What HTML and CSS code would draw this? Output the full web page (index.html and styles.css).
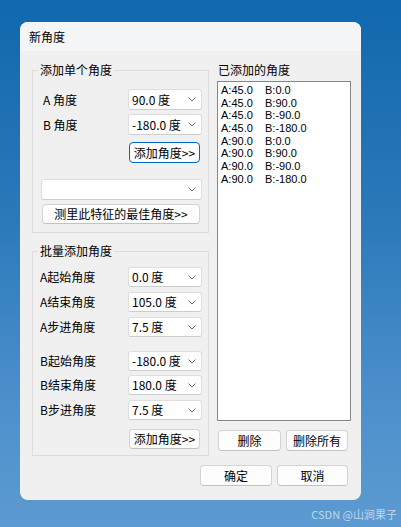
FILE: index.html
```html
<!DOCTYPE html>
<html lang="zh">
<head>
<meta charset="utf-8">
<title>新角度</title>
<link rel="stylesheet" href="styles.css">
</head>
<body>
<div class="desktop">
  <div class="dialog">
    <div class="titlebar">新角度</div>
    <div class="content">
      <div class="left">
        <fieldset class="group g1">
          <legend>添加单个角度</legend>
          <div class="row">
            <span class="label">A 角度</span>
            <div class="combo"><span>90.0 度</span><svg class="chev" width="8" height="5" viewBox="0 0 8 5"><path d="M0.5 0.5L4 4L7.5 0.5"/></svg></div>
          </div>
          <div class="row r-gap4">
            <span class="label">B 角度</span>
            <div class="combo"><span>-180.0 度</span><svg class="chev" width="8" height="5" viewBox="0 0 8 5"><path d="M0.5 0.5L4 4L7.5 0.5"/></svg></div>
          </div>
          <div class="btnrow g1add">
            <button class="btn focus w71">添加角度&gt;&gt;</button>
          </div>
          <div class="combo wide"><span></span><svg class="chev" width="8" height="5" viewBox="0 0 8 5"><path d="M0.5 0.5L4 4L7.5 0.5"/></svg></div>
          <button class="btn measure">测里此特征的最佳角度&gt;&gt;</button>
        </fieldset>
        <fieldset class="group g2">
          <legend>批量添加角度</legend>
          <div class="row h20">
            <span class="label">A起始角度</span>
            <div class="combo"><span>0.0 度</span><svg class="chev" width="8" height="5" viewBox="0 0 8 5"><path d="M0.5 0.5L4 4L7.5 0.5"/></svg></div>
          </div>
          <div class="row h20 r-gap5">
            <span class="label">A结束角度</span>
            <div class="combo"><span>105.0 度</span><svg class="chev" width="8" height="5" viewBox="0 0 8 5"><path d="M0.5 0.5L4 4L7.5 0.5"/></svg></div>
          </div>
          <div class="row h20 r-gap5">
            <span class="label">A步进角度</span>
            <div class="combo"><span>7.5 度</span><svg class="chev" width="8" height="5" viewBox="0 0 8 5"><path d="M0.5 0.5L4 4L7.5 0.5"/></svg></div>
          </div>
          <div class="row h20 r-gap14">
            <span class="label">B起始角度</span>
            <div class="combo"><span>-180.0 度</span><svg class="chev" width="8" height="5" viewBox="0 0 8 5"><path d="M0.5 0.5L4 4L7.5 0.5"/></svg></div>
          </div>
          <div class="row h20 r-gap4">
            <span class="label">B结束角度</span>
            <div class="combo"><span>180.0 度</span><svg class="chev" width="8" height="5" viewBox="0 0 8 5"><path d="M0.5 0.5L4 4L7.5 0.5"/></svg></div>
          </div>
          <div class="row h20 r-gap5">
            <span class="label">B步进角度</span>
            <div class="combo"><span>7.5 度</span><svg class="chev" width="8" height="5" viewBox="0 0 8 5"><path d="M0.5 0.5L4 4L7.5 0.5"/></svg></div>
          </div>
          <div class="btnrow g2add">
            <button class="btn w71 h20">添加角度&gt;&gt;</button>
          </div>
        </fieldset>
      </div>
      <div class="right">
        <div class="rlabel">已添加的角度</div>
        <div class="listbox">
          <div class="item"><span class="ca">A:45.0</span><span>B:0.0</span></div>
          <div class="item"><span class="ca">A:45.0</span><span>B:90.0</span></div>
          <div class="item"><span class="ca">A:45.0</span><span>B:-90.0</span></div>
          <div class="item"><span class="ca">A:45.0</span><span>B:-180.0</span></div>
          <div class="item"><span class="ca">A:90.0</span><span>B:0.0</span></div>
          <div class="item"><span class="ca">A:90.0</span><span>B:90.0</span></div>
          <div class="item"><span class="ca">A:90.0</span><span>B:-90.0</span></div>
          <div class="item"><span class="ca">A:90.0</span><span>B:-180.0</span></div>
        </div>
        <div class="listbtns">
          <button class="btn del">删除</button>
          <button class="btn delall">删除所有</button>
        </div>
      </div>
    </div>
    <div class="footer">
      <button class="btn ok">确定</button>
      <button class="btn cancel">取消</button>
    </div>
  </div>
  <div class="watermark">CSDN @山涧果子</div>
</div>
</body>
</html>
```

FILE: styles.css
```css
* { box-sizing: border-box; }

html, body {
  margin: 0;
  padding: 0;
  width: 401px;
  height: 527px;
  overflow: hidden;
}

body {
  font-family: "Noto Sans CJK SC", "Noto Sans", sans-serif;
  font-size: 12px;
  color: #000;
}

.desktop {
  position: relative;
  width: 401px;
  height: 527px;
  padding: 22px 0 0 20px;
  background: linear-gradient(180deg, #1168ad 0%, #2a78ba 40%, #4b8fcb 75%, #5c9bd1 100%);
}

.dialog {
  width: 341px;
  height: 478px;
  border-radius: 8px;
  background: #f0f0f0;
  overflow: hidden;
  display: flex;
  flex-direction: column;
}

.titlebar {
  height: 29px;
  flex: none;
  background: #f3f5f7;
  padding-left: 9px;
  line-height: 29px;
  font-size: 12px;
}

.content {
  display: flex;
  padding: 11px 0 0 12px;
}

.left {
  width: 177px;
  flex: none;
  display: flex;
  flex-direction: column;
}

.group {
  margin: 0;
  padding: 0;
  min-width: 0;
  border: 1px solid #dcdcdc;
  display: flex;
  flex-direction: column;
}

.group legend {
  margin-left: 5px;
  padding: 0 2px;
  line-height: 16px;
  height: 16px;
  font-size: 12px;
}

.g1 { padding: 11px 0 8px 0; }
.g2 { margin-top: 10px; padding: 8px 0 6px 0; }

.row {
  display: flex;
  align-items: center;
  height: 21px;
  padding-right: 6px;
}
.row.h20 { height: 20px; }
.g1 .label { padding-left: 10px; }
.g2 .label { padding-left: 7px; }
.r-gap4 { margin-top: 4px; }
.r-gap5 { margin-top: 5px; }
.r-gap14 { margin-top: 14px; }

.label {
  line-height: 16px;
}

.combo {
  margin-left: auto;
  width: 74px;
  height: 100%;
  background: #fff;
  border: 1px solid #dedede;
  border-bottom-color: #cdcdcd;
  border-radius: 3px;
  display: flex;
  align-items: center;
  padding: 0 5px 0 3px;
  line-height: 16px;
  white-space: nowrap;
}
.combo span { flex: 1; }
.chev { flex: none; }
.chev path { stroke: #6a6a6a; stroke-width: 1; fill: none; }

.combo.wide {
  width: auto;
  height: 21px;
  margin: 16px 6px 0 8px;
}

.btn {
  font-family: "Noto Sans CJK SC", "Noto Sans", sans-serif;
  font-size: 12px;
  color: #000;
  background: #fdfdfd;
  border: 1px solid #d3d3d3;
  border-bottom-color: #c2c2c2;
  border-radius: 4px;
  height: 21px;
  padding: 0;
  line-height: 16px;
  margin: 0;
}

.btnrow {
  display: flex;
  justify-content: flex-end;
  padding-right: 8px;
}
.g1add { margin-top: 7px; }
.g2add { margin-top: 9px; }

.w71 { width: 71px; }
.h20 { height: 20px; }
.btn.focus {
  border: 1px solid #0067c0;
}

.measure {
  height: 20px;
  margin: 4px 8px 0 9px;
}

.right {
  width: 134px;
  margin-left: 8px;
  flex: none;
  display: flex;
  flex-direction: column;
}

.rlabel {
  line-height: 16px;
  padding-left: 1px;
}

.listbox {
  margin-top: 3px;
  height: 340px;
  background: #fff;
  border: 1px solid #828790;
  padding: 2px 0 0 3px;
  font-family: "Liberation Sans", "Noto Sans CJK SC", sans-serif;
  font-size: 11px;
}

.item {
  display: flex;
  line-height: 12.7px;
  height: 12.7px;
  white-space: nowrap;
}
.ca { width: 44px; }

.listbtns {
  display: flex;
  gap: 5px;
  margin-top: 9px;
  padding-left: 1px;
}
.del { width: 63px; }
.delall { width: 62px; }

.footer {
  display: flex;
  justify-content: flex-end;
  gap: 5px;
  padding-right: 13px;
  margin-top: 9px;
}
.ok { width: 72px; }
.cancel { width: 71px; }

.watermark {
  position: absolute;
  right: 4px;
  bottom: 6px;
  font-size: 11px;
  line-height: 14px;
  color: rgba(225, 235, 245, 0.75);
}
```
